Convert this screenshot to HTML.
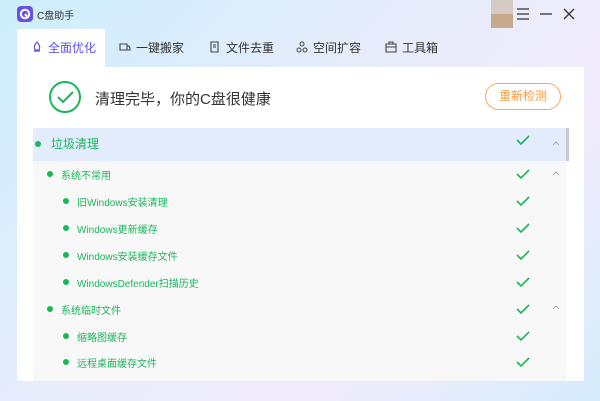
<!DOCTYPE html>
<html><head><meta charset="utf-8"><style>
*{margin:0;padding:0;box-sizing:border-box}
body{width:600px;height:401px;overflow:hidden;position:relative;font-family:"Liberation Sans","Noto Sans CJK SC",sans-serif;background:linear-gradient(135deg,#cdeefc 0%,#e8ecfb 45%,#f1ebfb 70%,#d6ecfc 100%)}
.abs{position:absolute}
.tab{position:absolute;top:29px;height:38px;line-height:38px;font-size:12px;color:#333}
.panel{left:17px;top:67px;width:567px;height:314px;background:#fff}
.list{left:33px;top:128px;width:533px;height:253px;background:#f8f8f8}
.row{position:absolute;left:0;width:533px;font-size:10px;color:#1bb55c}
.dot{position:absolute;width:6px;height:6px;border-radius:50%;background:#18b858}
</style></head><body>
<div class="abs" style="left:17px;top:6px;width:16px;height:16px;border-radius:4px;background:#6a4ee8"></div>
<svg class="abs" style="left:17px;top:6px" width="16" height="16"><circle cx="8" cy="8" r="4.2" fill="none" stroke="#fff" stroke-width="2"/><path d="M8 8l3 4" stroke="#fff" stroke-width="2"/></svg>
<div class="abs" style="left:37px;top:7px;font-size:10px;color:#333">C盘助手</div>
<div class="abs" style="left:491px;top:0;width:22px;height:28px;background:linear-gradient(#d6cac4 50%,#c8a98e 50%)"></div>
<svg class="abs" style="left:514px;top:6px" width="70" height="16"><path d="M3 3h12M3 8h12M3 13h12" stroke="#333" stroke-width="1.3"/><path d="M26 8h12" stroke="#333" stroke-width="1.3"/><path d="M50 3l10 10M60 3l-10 10" stroke="#333" stroke-width="1.3"/></svg>
<div class="abs" style="left:17px;top:29px;width:88px;height:38px;background:#fff"></div>
<div class="tab" style="left:31px;color:#5b52e8"><svg width="12" height="12" style="vertical-align:-1px;margin-right:5px"><path d="M6 1C3 4 3 7 4 9h4c1-2 1-5-2-8zM3 10h6" fill="none" stroke="#5b52e8" stroke-width="1.2"/></svg>全面优化</div>
<div class="tab" style="left:119px"><svg width="12" height="12" style="vertical-align:-1px;margin-right:5px"><path d="M1 3h7v6H1zM8 5h2l1 2v2H8" fill="none" stroke="#444" stroke-width="1.1"/></svg>一键搬家</div>
<div class="tab" style="left:209px"><svg width="12" height="12" style="vertical-align:-1px;margin-right:5px"><path d="M2 1h7v10H2zM4 4h3M4 6h3" fill="none" stroke="#444" stroke-width="1.1"/></svg>文件去重</div>
<div class="tab" style="left:296px"><svg width="12" height="12" style="vertical-align:-1px;margin-right:5px"><circle cx="6" cy="3" r="2" fill="none" stroke="#444"/><circle cx="3" cy="9" r="2" fill="none" stroke="#444"/><circle cx="9" cy="9" r="2" fill="none" stroke="#444"/></svg>空间扩容</div>
<div class="tab" style="left:385px"><svg width="12" height="12" style="vertical-align:-1px;margin-right:5px"><path d="M1 3h10v8H1zM4 3V1h4v2M1 6h10" fill="none" stroke="#444" stroke-width="1.1"/></svg>工具箱</div>
<div class="abs panel"></div>
<svg class="abs" style="left:48px;top:80px" width="34" height="34"><circle cx="17" cy="17" r="15" fill="none" stroke="#1db55a" stroke-width="2"/><path d="M10 17l5 5 10-10" fill="none" stroke="#1db55a" stroke-width="2"/></svg>
<div class="abs" style="left:95px;top:88px;font-size:15px;color:#333">清理完毕，你的C盘很健康</div>
<div class="abs" style="left:485px;top:83px;width:76px;height:27px;border:1px solid #f7a75a;border-radius:14px;color:#f59a45;font-size:12px;text-align:center;line-height:25px">重新检测</div>
<div class="abs list"></div>
<div class="abs" style="left:33px;top:128px;width:533px;height:33px;background:#e3ecfc"></div>
<div class="abs" style="left:566px;top:128px;width:3px;height:33px;background:#c8c8d0"></div>
<div class="abs" style="left:33px;top:126px;width:533px;height:253px">
<div class="row" style="top:9px;font-size:12px"><span class="dot" style="left:2px;top:6px"></span><span style="position:absolute;left:18px">垃圾清理</span></div>
<div class="row" style="top:41px"><span class="dot" style="left:14px;top:4px"></span><span style="position:absolute;left:28px">系统不常用</span></div>
<div class="row" style="top:68px"><span class="dot" style="left:30px;top:4px"></span><span style="position:absolute;left:44px">旧Windows安装清理</span></div>
<div class="row" style="top:95px"><span class="dot" style="left:30px;top:4px"></span><span style="position:absolute;left:44px">Windows更新缓存</span></div>
<div class="row" style="top:122px"><span class="dot" style="left:30px;top:4px"></span><span style="position:absolute;left:44px">Windows安装缓存文件</span></div>
<div class="row" style="top:149px"><span class="dot" style="left:30px;top:4px"></span><span style="position:absolute;left:44px">WindowsDefender扫描历史</span></div>
<div class="row" style="top:176px"><span class="dot" style="left:14px;top:4px"></span><span style="position:absolute;left:28px">系统临时文件</span></div>
<div class="row" style="top:203px"><span class="dot" style="left:30px;top:4px"></span><span style="position:absolute;left:44px">缩略图缓存</span></div>
<div class="row" style="top:229px"><span class="dot" style="left:30px;top:4px"></span><span style="position:absolute;left:44px">远程桌面缓存文件</span></div>
</div>
<svg class="abs" style="left:516px;top:128px" width="50" height="253" fill="none" stroke="#1db55a" stroke-width="1.6">
<path d="M1 12l4 4 8-8M1 46l4 4 8-8M1 73l4 4 8-8M1 100l4 4 8-8M1 127l4 4 8-8M1 154l4 4 8-8M1 181l4 4 8-8M1 208l4 4 8-8M1 234l4 4 8-8"/>
<path d="M37 17l3-3 3 3M37 47l3-3 3 3M37 181l3-3 3 3" stroke="#999" stroke-width="0.8"/>
</svg>
</body></html>
